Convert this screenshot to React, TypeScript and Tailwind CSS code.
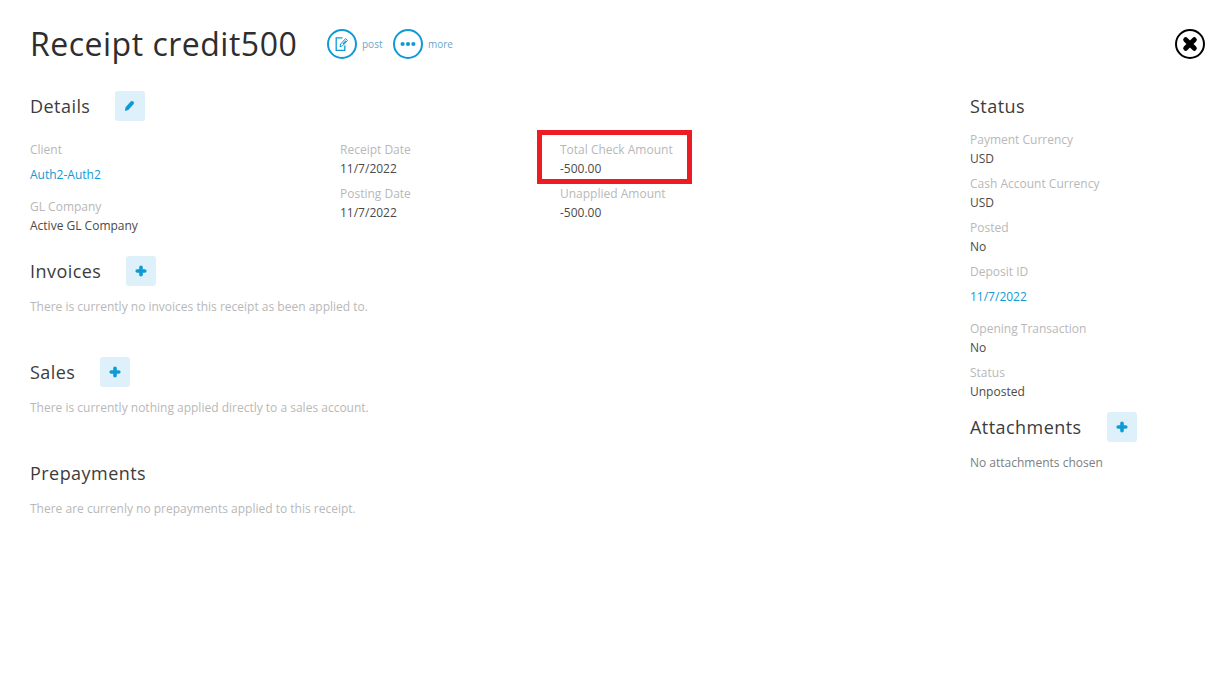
import React from 'react';

const font = { fontFamily: '"Open Sans", sans-serif' };

function Field({ label, value }: { label: string; value: string }) {
  return (
    <div className="mb-[6px]">
      <div className="h-[19px] leading-[19px] text-[#b8b8b8]">{label}</div>
      <div className="h-[19px] leading-[19px] text-[#4a4a4a]">{value}</div>
    </div>
  );
}

function LinkField({ label, value }: { label: string; value: string }) {
  return (
    <div className="mb-[13px]">
      <div className="h-[19px] leading-[19px] text-[#b8b8b8]">{label}</div>
      <div className="mt-[6px] h-[19px] leading-[19px] text-[#0f9ad6]">{value}</div>
    </div>
  );
}

function PlusIcon() {
  return (
    <svg width="12" height="12" viewBox="0 0 12 12">
      <path d="M6 2.2v7.6M2.2 6h7.6" stroke="#0f9ad6" strokeWidth="3.6" strokeLinecap="round" />
    </svg>
  );
}

function PencilIcon() {
  return (
    <svg width="12" height="12" viewBox="0 0 12 12">
      <path d="M1 11l.4-3.6 5-5.6c.9-.9 2.2-1 3-.2s.8 2-.1 2.9l-5 5.4z" fill="#0f9ad6" />
    </svg>
  );
}

function SquareButton({ children }: { children: React.ReactNode }) {
  return (
    <button className="w-[30px] h-[30px] rounded-[3px] bg-[#def0fa] flex items-center justify-center">
      {children}
    </button>
  );
}

function Heading({ title, children }: { title: string; children?: React.ReactNode }) {
  return (
    <div className="flex items-center h-[30px]">
      <h2 className="text-[18px] font-medium tracking-[0.45px] text-[#3c3c3c] leading-[30px]">{title}</h2>
      {children && <div className="ml-[25px]">{children}</div>}
    </div>
  );
}

function CircleAction({ label, children }: { label: string; children: React.ReactNode }) {
  return (
    <div className="flex items-center gap-[5px]">
      <div className="w-[30px] h-[30px] rounded-full border-2 border-[#0f9ad6] flex items-center justify-center">
        {children}
      </div>
      <span className="w-[21px] text-[10px] text-[#6ba6cc] leading-none">{label}</span>
    </div>
  );
}

export default function App() {
  return (
    <div className="relative w-[1218px] h-[674px] bg-white overflow-hidden text-[12px]" style={font}>
      {/* Header */}
      <div className="flex items-center h-[30px] absolute top-[29px] left-[30px]">
        <h1 className="w-[267px] text-[32px] font-medium tracking-[0.5px] text-[#2e2e2e] leading-[30px] whitespace-nowrap">Receipt credit500</h1>
        <div className="flex items-center gap-[10px] ml-[30px]">
          <CircleAction label="post">
            <svg width="18" height="18" viewBox="0 0 18 18" fill="none" stroke="#0f9ad6">
              <path d="M9.5 2.8H3.2v12.6h8.6v-5" strokeWidth="1.3" />
              <path d="M7 11.6l.6-2.6 5-5.4 1.9 1.9-5 5.4z" strokeWidth="1" />
              <path d="M9.5 8.6l3.2-3.4 .8 .8-3.2 3.4z" fill="#0f9ad6" stroke="none" />
            </svg>
          </CircleAction>
          <CircleAction label="more">
            <svg width="16" height="6" viewBox="0 0 16 6">
              <circle cx="2.6" cy="3" r="2.1" fill="#0f9ad6" />
              <circle cx="8" cy="3" r="2.1" fill="#0f9ad6" />
              <circle cx="13.4" cy="3" r="2.1" fill="#0f9ad6" />
            </svg>
          </CircleAction>
        </div>
      </div>

      {/* Close */}
      <button className="absolute left-[1175px] top-[29px] w-[30px] h-[30px] rounded-full border-2 border-black flex items-center justify-center">
        <svg width="16" height="16" viewBox="0 0 16 16">
          <path d="M3.7 3.7l8.6 8.6M12.3 3.7l-8.6 8.6" stroke="#000" strokeWidth="5" strokeLinecap="round" />
        </svg>
      </button>

      <div className="flex pt-[91px] pl-[30px]">
        {/* Left */}
        <div className="w-[940px]">
          <Heading title="Details">
            <SquareButton><PencilIcon /></SquareButton>
          </Heading>

          <div className="flex mt-[19px] h-[105px]">
            <div className="w-[310px]">
              <LinkField label="Client" value="Auth2-Auth2" />
              <Field label="GL Company" value="Active GL Company" />
            </div>
            <div className="w-[220px]">
              <Field label="Receipt Date" value="11/7/2022" />
              <Field label="Posting Date" value="11/7/2022" />
            </div>
            <div>
              <Field label="Total Check Amount" value="-500.00" />
              <Field label="Unapplied Amount" value="-500.00" />
            </div>
          </div>

          <div className="mt-[11px]">
            <Heading title="Invoices">
              <SquareButton><PlusIcon /></SquareButton>
            </Heading>
            <p className="mt-[11px] h-[19px] leading-[19px] text-[#b8b8b8]">There is currently no invoices this receipt as been applied to.</p>
          </div>

          <div className="mt-[41px]">
            <Heading title="Sales">
              <SquareButton><PlusIcon /></SquareButton>
            </Heading>
            <p className="mt-[11px] h-[19px] leading-[19px] text-[#b8b8b8]">There is currently nothing applied directly to a sales account.</p>
          </div>

          <div className="mt-[41px]">
            <Heading title="Prepayments" />
            <p className="mt-[11px] h-[19px] leading-[19px] text-[#b8b8b8]">There are currenly no prepayments applied to this receipt.</p>
          </div>
        </div>

        {/* Right */}
        <div className="w-[248px]">
          <Heading title="Status" />
          <div className="mt-[9px]">
            <Field label="Payment Currency" value="USD" />
            <Field label="Cash Account Currency" value="USD" />
            <Field label="Posted" value="No" />
            <LinkField label="Deposit ID" value="11/7/2022" />
            <Field label="Opening Transaction" value="No" />
            <Field label="Status" value="Unposted" />
          </div>
          <div className="mt-[11px]">
            <Heading title="Attachments">
              <SquareButton><PlusIcon /></SquareButton>
            </Heading>
            <p className="mt-[11px] h-[19px] leading-[19px] text-[#808080]">No attachments chosen</p>
          </div>
        </div>
      </div>

      {/* Red annotation box */}
      <div className="absolute left-[537px] top-[130px] w-[155px] h-[54px] border-[5px] border-[#ed1c24]" />
    </div>
  );
}
